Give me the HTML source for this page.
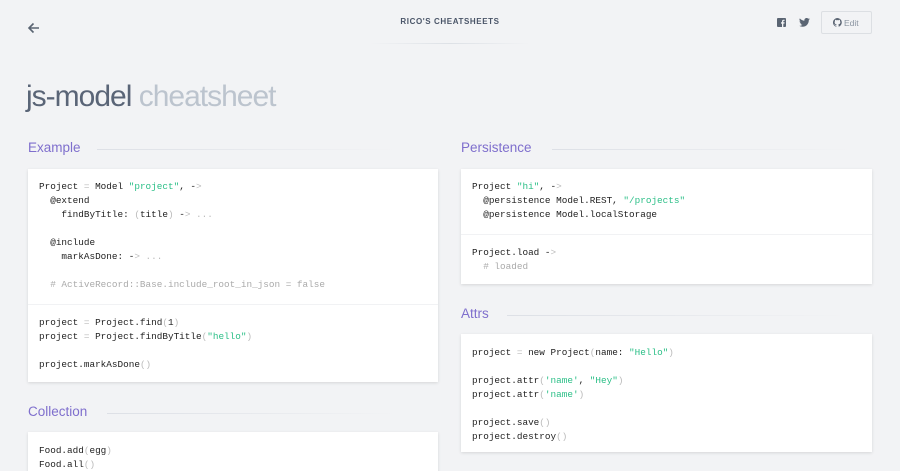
<!DOCTYPE html>
<html><head><meta charset="utf-8"><style>
*{margin:0;padding:0;box-sizing:border-box}
html{width:900px;height:471px;overflow:hidden}
body{width:900px;height:471px;overflow:hidden;background:#f2f3f5;font-family:"Liberation Sans",sans-serif;position:relative}
.abs{position:absolute}
.brand{left:0;width:900px;top:17px;text-align:center;font-size:8px;font-weight:bold;letter-spacing:.6px;color:#4a5568}
.hl{left:370px;top:43px;width:160px;height:1px;background:linear-gradient(90deg,transparent,#dde1e6,transparent)}
h1{position:absolute;left:26px;top:80px;font-size:30px;font-weight:300;letter-spacing:-1px;color:#5a6577;font-family:"Liberation Sans",sans-serif}
h1 span{color:#bcc4ce}
h2{position:absolute;font-size:13.5px;font-weight:normal;color:#7f6fcd}
.line{position:absolute;height:1px;background:linear-gradient(90deg,#dde0e6,#f2f3f5)}
.box{position:absolute;background:#fff;box-shadow:0 1px 3px rgba(0,0,0,.12);overflow:hidden}
pre{font-family:"Liberation Mono",monospace;font-size:9.35px;line-height:14px;color:#222;padding:0 11px}
.sep{border-top:1px solid #f1f2f4}
.s{color:#2bbf87}.p{color:#bbb}.c{color:#aaa}
.btn{left:821px;top:11px;width:51px;height:23px;border:1px solid #dcdfe3;border-radius:2px;font-size:8.5px;color:#8a94a0;padding:6px 0 0 11px}
</style></head><body>
<svg class="abs" style="left:27px;top:21px" width="14" height="14" viewBox="0 0 14 14"><path d="M12 7H2M6.5 2.5L2 7l4.5 4.5" stroke="#5a6472" stroke-width="1.6" fill="none"/></svg>
<div class="abs brand">RICO'S CHEATSHEETS</div>
<div class="abs hl"></div>
<svg class="abs" style="left:777px;top:18px" width="9" height="9" viewBox="0 0 9 9"><rect width="9" height="9" rx="1" fill="#5a6472"/><path d="M6.3 9V5.6h1.1l.2-1.3H6.3v-.8c0-.4.1-.6.6-.6h.7V1.8H6.6c-1.1 0-1.6.6-1.6 1.6v.9H4v1.3h1V9z" fill="#f2f3f5"/></svg>
<svg class="abs" style="left:799px;top:18px" width="11" height="9" viewBox="0 0 24 20"><path d="M24 2.4a10 10 0 0 1-2.8.8A5 5 0 0 0 23.3.4a10 10 0 0 1-3.1 1.2A4.9 4.9 0 0 0 11.8 6 14 14 0 0 1 1.7.9a4.9 4.9 0 0 0 1.5 6.6A4.9 4.9 0 0 1 1 6.9a4.9 4.9 0 0 0 3.900 4.8 5 5 0 0 1-2.2.1 4.9 4.9 0 0 0 4.6 3.4A9.9 9.9 0 0 1 0 17.3 14 14 0 0 0 7.5 19.5c9.1 0 14-7.5 14-14v-.6A10 10 0 0 0 24 2.4z" fill="#5a6472"/></svg>
<div class="abs btn"><svg width="9" height="9" viewBox="0 0 16 16" style="vertical-align:-1px;margin-right:2px"><path d="M8 0a8 8 0 0 0-2.5 15.6c.4 0 .5-.2.5-.4v-1.5c-2.2.5-2.7-1-2.7-1-.4-.9-.9-1.2-.9-1.2-.7-.5.1-.5.1-.5.8.1 1.2.8 1.2.8.7 1.3 1.9.9 2.3.7.1-.5.3-.9.5-1.1-1.8-.2-3.6-.9-3.6-4 0-.9.3-1.600.8-2.1-.1-.2-.4-1 .1-2.1 0 0 .7-.2 2.2.8a7.5 7.5 0 0 1 4 0c1.5-1 2.2-.8 2.2-.8.4 1.1.2 1.9.1 2.1.5.6.8 1.3.8 2.1 0 3.1-1.9 3.7-3.6 3.9.3.3.5.8.5 1.5v2.2c0 .2.1.5.6.4A8 8 0 0 0 8 0z" fill="#5a6472"/></svg>Edit</div>
<h1>js-model <span>cheatsheet</span></h1>

<h2 style="left:28px;top:140px">Example</h2>
<div class="line" style="left:97px;top:149px;width:300px"></div>
<div class="box" style="left:28px;top:169px;width:410px;height:213px">
<pre style="padding-top:11px;padding-bottom:12px">Project <span class="p">=</span> Model <span class="s">"project"</span>, -<span class="p">&gt;</span>
  @extend
    findByTitle: <span class="p">(</span>title<span class="p">)</span> -<span class="p">&gt; ...</span>

  @include
    markAsDone: -<span class="p">&gt; ...</span>

<span class="c">  # ActiveRecord::Base.include_root_in_json = false</span></pre>
<div class="sep"></div>
<pre style="padding-top:11px">project <span class="p">=</span> Project.find<span class="p">(</span>1<span class="p">)</span>
project <span class="p">=</span> Project.findByTitle<span class="p">(</span><span class="s">"hello"</span><span class="p">)</span>

project.markAsDone<span class="p">()</span></pre>
</div>

<h2 style="left:28px;top:404px">Collection</h2>
<div class="line" style="left:107px;top:413px;width:290px"></div>
<div class="box" style="left:28px;top:432px;width:410px;height:60px">
<pre style="padding-top:12px">Food.add<span class="p">(</span>egg<span class="p">)</span>
Food.all<span class="p">()</span></pre>
</div>

<h2 style="left:461px;top:140px">Persistence</h2>
<div class="line" style="left:552px;top:149px;width:300px"></div>
<div class="box" style="left:461px;top:169px;width:411px;height:115px">
<pre style="padding-top:11px;padding-bottom:12px">Project <span class="s">"hi"</span>, -<span class="p">&gt;</span>
  @persistence Model.REST, <span class="s">"/projects"</span>
  @persistence Model.localStorage</pre>
<div class="sep"></div>
<pre style="padding-top:11px">Project.load -<span class="p">&gt;</span>
<span class="c">  # loaded</span></pre>
</div>

<h2 style="left:461px;top:306px">Attrs</h2>
<div class="line" style="left:507px;top:315px;width:340px"></div>
<div class="box" style="left:461px;top:334px;width:411px;height:118px">
<pre style="padding-top:12px">project <span class="p">=</span> new Project<span class="p">(</span>name: <span class="s">"Hello"</span><span class="p">)</span>

project.attr<span class="p">(</span><span class="s">'name'</span>, <span class="s">"Hey"</span><span class="p">)</span>
project.attr<span class="p">(</span><span class="s">'name'</span><span class="p">)</span>

project.save<span class="p">()</span>
project.destroy<span class="p">()</span></pre>
</div>
</body></html>
